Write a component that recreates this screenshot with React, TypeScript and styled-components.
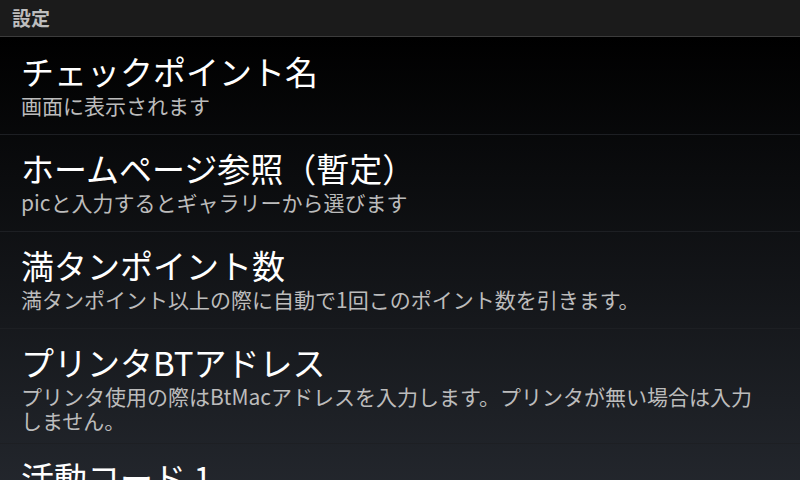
import React from 'react';
import styled, { createGlobalStyle } from 'styled-components';

const GlobalStyle = createGlobalStyle`
  * { box-sizing: border-box; }
  html, body {
    margin: 0;
    padding: 0;
    width: 800px;
    height: 480px;
    overflow: hidden;
    background: #000;
    font-family: "Noto Sans CJK JP", "Noto Sans", sans-serif;
  }
`;

interface PrefItem {
  title: string;
  summary?: string;
}

const items: PrefItem[] = [
  { title: 'チェックポイント名', summary: '画面に表示されます' },
  { title: 'ホームページ参照（暫定）', summary: 'picと入力するとギャラリーから選びます' },
  { title: '満タンポイント数', summary: '満タンポイント以上の際に自動で1回このポイント数を引きます。' },
  {
    title: 'プリンタBTアドレス',
    summary: 'プリンタ使用の際はBtMacアドレスを入力します。プリンタが無い場合は入力しません。',
  },
  { title: '活動コード 1', summary: '' },
];

const Screen = styled.div`
  width: 800px;
  height: 480px;
  display: flex;
  flex-direction: column;
  overflow: hidden;
`;

const Header = styled.div`
  flex: none;
  height: 37px;
  padding-left: 12px;
  background: #1b1b1b;
  border-bottom: 1px solid #3c3c3c;
  color: #bdbdbd;
  font-size: 19px;
  font-weight: 700;
  line-height: 36px;
`;

const List = styled.div`
  flex: 1;
  display: flex;
  flex-direction: column;
  background: linear-gradient(180deg, #000000 0%, #272b32 100%);
`;

const Row = styled.div<{ $first?: boolean }>`
  flex: none;
  min-height: ${({ $first }) => ($first ? 98 : 97)}px;
  padding: ${({ $first }) => ($first ? 14 : 13)}px 38px 11px 21px;
  display: flex;
  flex-direction: column;
  gap: 2px;
  border-bottom: 1px solid #1d1f23;
`;

const Title = styled.div`
  color: #ffffff;
  font-size: 33px;
  line-height: 40px;
  white-space: nowrap;
`;

const Summary = styled.div`
  color: #bcbcbc;
  font-size: 21px;
  line-height: 24px;
`;

const PreferenceRow: React.FC<PrefItem & { first?: boolean }> = ({ title, summary, first }) => (
  <Row $first={first}>
    <Title>{title}</Title>
    {summary ? <Summary>{summary}</Summary> : null}
  </Row>
);

export default function App() {
  return (
    <>
      <GlobalStyle />
      <Screen>
        <Header>設定</Header>
        <List>
          {items.map((item, i) => (
            <PreferenceRow key={item.title} title={item.title} summary={item.summary} first={i === 0} />
          ))}
        </List>
      </Screen>
    </>
  );
}
